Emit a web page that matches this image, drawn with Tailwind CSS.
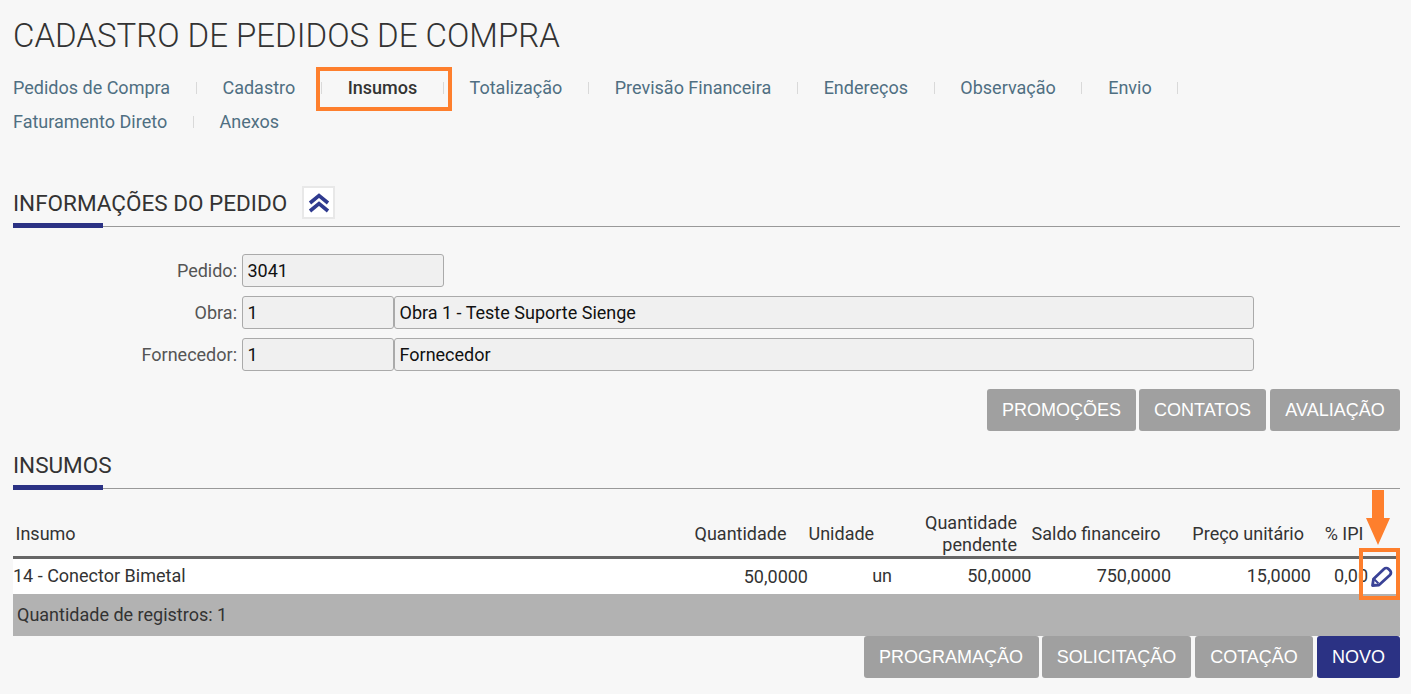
<!DOCTYPE html>
<html lang="pt-BR">
<head>
  <meta charset="UTF-8">
  <title>Cadastro de Pedidos de Compra</title>
  <script src="https://cdn.jsdelivr.net/npm/@tailwindcss/browser@4"></script>
</head>
<body class="relative h-[694px] overflow-hidden bg-[#f7f7f7] font-['Roboto',sans-serif] text-[#333]">
  <div class="pl-[13px] pr-[11px]">
    <!-- Title -->
    <h1 class="pt-[16px] h-[67px] text-[33px] leading-[40px] font-light text-[#333]">CADASTRO DE PEDIDOS DE COMPRA</h1>

    <!-- Tabs -->
    <nav class="h-[88px] w-[1200px] flex flex-wrap content-start text-[18px] leading-[34px] text-[#4f6f82] pt-[4px]">
      <a class="flex items-center">Pedidos de Compra<span class="mx-[25.7px] w-px h-[12px] bg-[#d9d9d9]"></span></a>
      <a class="flex items-center">Cadastro<span class="mx-[25.7px] w-px h-[12px] bg-[#d9d9d9]"></span></a>
      <a class="flex items-center font-medium text-[#333]">Insumos<span class="mx-[25.7px] w-px h-[12px] bg-[#d9d9d9]"></span></a>
      <a class="flex items-center">Totalização<span class="mx-[25.7px] w-px h-[12px] bg-[#d9d9d9]"></span></a>
      <a class="flex items-center">Previsão Financeira<span class="mx-[25.7px] w-px h-[12px] bg-[#d9d9d9]"></span></a>
      <a class="flex items-center">Endereços<span class="mx-[25.7px] w-px h-[12px] bg-[#d9d9d9]"></span></a>
      <a class="flex items-center">Observação<span class="mx-[25.7px] w-px h-[12px] bg-[#d9d9d9]"></span></a>
      <a class="flex items-center">Envio<span class="mx-[25.7px] w-px h-[12px] bg-[#d9d9d9]"></span></a>
      <a class="flex items-center">Faturamento Direto<span class="mx-[25.7px] w-px h-[12px] bg-[#d9d9d9]"></span></a>
      <a class="flex items-center">Anexos</a>
    </nav>

    <!-- Informacoes do pedido -->
    <div class="relative h-[72px] flex items-end border-b border-[#999] pb-[7px]">
      <h2 class="text-[22.5px] leading-[31px] text-[#333]">INFORMAÇÕES DO PEDIDO</h2>
      <button class="ml-[15px] w-[33px] h-[33px] flex items-center justify-center bg-white border-2 border-[#e8e8e8]">
        <svg width="22" height="20" viewBox="0 0 22 20" fill="none" stroke="#2f3a8f" stroke-width="3.6"><path d="M2 10 11 2.5 20 10"/><path d="M2 18 11 10.5 20 18"/></svg>
      </button>
      <div class="absolute left-0 bottom-[-2px] w-[90px] h-[5px] bg-[#2b3284]"></div>
    </div>

    <form class="pt-[27px] text-[18px]">
      <div class="flex items-center h-[33px]">
        <label class="w-[224px] text-right text-[#555]">Pedido:</label>
        <div class="ml-[5px] w-[202px] h-[33px] pl-[4.5px] leading-[31px] bg-[#f0f0f0] border border-[#aaa] rounded-[3px] text-[#111]">3041</div>
      </div>
      <div class="flex items-center h-[33px] mt-[9px]">
        <label class="w-[224px] text-right text-[#555]">Obra:</label>
        <div class="ml-[5px] w-[152px] h-[33px] pl-[4.5px] leading-[31px] bg-[#f0f0f0] border border-[#aaa] rounded-[3px] text-[#111]">1</div>
        <div class="w-[860px] h-[33px] pl-[4.5px] leading-[31px] bg-[#f0f0f0] border border-[#aaa] rounded-[3px] text-[#111]">Obra 1 - Teste Suporte Sienge</div>
      </div>
      <div class="flex items-center h-[33px] mt-[9px]">
        <label class="w-[224px] text-right text-[#555]">Fornecedor:</label>
        <div class="ml-[5px] w-[152px] h-[33px] pl-[4.5px] leading-[31px] bg-[#f0f0f0] border border-[#aaa] rounded-[3px] text-[#111]">1</div>
        <div class="w-[860px] h-[33px] pl-[4.5px] leading-[31px] bg-[#f0f0f0] border border-[#aaa] rounded-[3px] text-[#111]">Fornecedor</div>
      </div>
      <div class="flex justify-end mt-[18px] font-['Liberation_Sans',sans-serif] text-[18px] text-white">
        <button class="h-[42px] w-[149px] mr-[3px] bg-[#a0a0a0] rounded-[3px]">PROMOÇÕES</button>
        <button class="h-[42px] w-[127px] mr-[4px] bg-[#a0a0a0] rounded-[3px]">CONTATOS</button>
        <button class="h-[42px] w-[130px] bg-[#a0a0a0] rounded-[3px]">AVALIAÇÃO</button>
      </div>
    </form>

    <!-- Insumos -->
    <div class="relative h-[58px] flex items-center border-b border-[#999] mt-[0px]">
      <h2 class="text-[22.5px] leading-[28px] pt-[10px] text-[#333]">INSUMOS</h2>
      <div class="absolute left-0 bottom-[-2px] w-[90px] h-[5px] bg-[#2b3284]"></div>
    </div>

    <table class="w-[1387px] table-fixed border-collapse text-[18px] leading-[22px] mt-[21px]">
      <colgroup>
        <col class="w-[795px]"><col class="w-[84px]"><col class="w-[139px]"><col class="w-[140px]"><col class="w-[140px]"><col class="w-[57px]"><col class="w-[32px]">
      </colgroup>
      <thead>
        <tr class="h-[47px] border-b-[3px] border-[#666] align-bottom">
          <th class="font-normal text-left pl-[2.5px] pb-[11px]"><div class="relative h-[22px]">Insumo<span class="absolute right-[21.5px] top-0">Quantidade</span></div></th>
          <th class="font-normal text-left pl-[0.5px] pb-[11px]">Unidade</th>
          <th class="font-normal text-right pr-[14px] pb-0">Quantidade<br>pendente</th>
          <th class="font-normal text-right pr-[10.5px] pb-[11px]">Saldo financeiro</th>
          <th class="font-normal text-right pr-[7px] pb-[11px]">Preço unitário</th>
          <th class="font-normal text-right pr-[4.5px] pb-[11px]">% IPI</th>
          <th></th>
        </tr>
      </thead>
      <tbody>
        <tr class="h-[37px] bg-white">
          <td class="relative">14 - Conector Bimetal<span class="absolute right-0 top-[7px]">50,0000</span></td>
          <td class="text-right">un</td>
          <td class="text-right"><span class="relative left-[0.5px]">50,0000</span></td>
          <td class="text-right">750,0000</td>
          <td class="text-right">15,0000</td>
          <td class="text-right">0,00</td>
          <td class="pl-[2px]">
            <svg width="24" height="24" viewBox="0 0 24 24" fill="none" stroke="#3a4296" stroke-width="2.8" stroke-linejoin="round"><path d="M2.500 21.500 3.500 15 14 5a3.200 3.200 0 0 1 4.500 0l1.500 1.500a3.200 3.200 0 0 1 0 4.500L9 21Z"/><path d="M4.500 15.500l4 4" stroke-width="2"/></svg>
          </td>
        </tr>
        <tr class="h-[42px] bg-[#b2b2b2]">
          <td colspan="7" class="pl-[4px]">Quantidade de registros: 1</td>
        </tr>
      </tbody>
    </table>

    <div class="flex justify-end font-['Liberation_Sans',sans-serif] text-[18px] text-white">
      <button class="h-[42px] w-[175px] mr-[3px] pr-[1px] bg-[#a0a0a0] rounded-[3px]">PROGRAMAÇÃO</button>
      <button class="h-[42px] w-[149px] mr-[4px] bg-[#a0a0a0] rounded-[3px]">SOLICITAÇÃO</button>
      <button class="h-[42px] w-[118px] mr-[4px] bg-[#a0a0a0] rounded-[3px]">COTAÇÃO</button>
      <button class="h-[42px] w-[83px] bg-[#2b3284] rounded-[3px]">NOVO</button>
    </div>
  </div>

  <!-- Annotations over the screenshot -->
  <div class="absolute left-[316px] top-[67px] w-[136px] h-[44px] border-[4px] border-[#fe7f2d]"></div>
  <div class="absolute left-[1359px] top-[548px] w-[41px] h-[52px] border-[4px] border-[#fe7f2d]"></div>
  <svg class="absolute left-[1366px] top-[490px]" width="24" height="55" viewBox="0 0 24 55"><path d="M6 0h12v28h6L12 55 0 28h6Z" fill="#fe7f2d"/></svg>
</body>
</html>
